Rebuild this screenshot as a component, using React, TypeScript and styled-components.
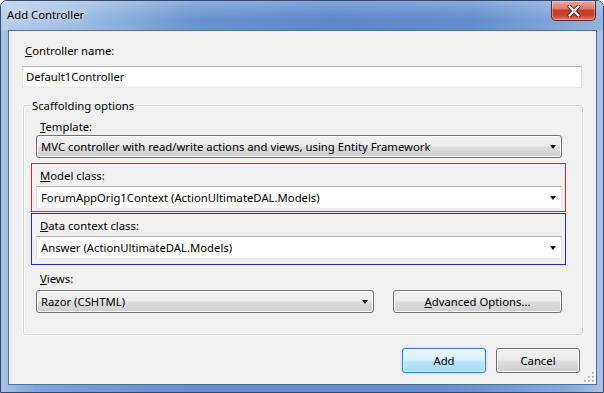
import React from 'react'
import styled, { createGlobalStyle, css } from 'styled-components'

const GlobalStyle = createGlobalStyle`
  html, body {
    margin: 0;
    padding: 0;
    background: #ffffff;
  }
  body {
    font-family: "Noto Sans", "Open Sans", sans-serif;
    font-size: 11.3px;
    color: #000;
  }
  * {
    box-sizing: border-box;
  }
`

const Window = styled.div`
  width: 604px;
  height: 393px;
  display: flex;
  flex-direction: column;
  border: 1px solid #34496b;
  border-radius: 7px 7px 0 0;
  overflow: hidden;
  background: linear-gradient(to right, #a9c3e6 0%, #7ea4d8 6%, #6690cd 30%, #6490cc 75%, #86a9da 94%, #a9c3e6 100%);
`

const TitleBar = styled.div`
  height: 29px;
  flex-shrink: 0;
  display: flex;
  align-items: flex-start;
  justify-content: space-between;
  padding: 0 7px 0 6px;
  background:
    linear-gradient(to bottom, rgba(255, 255, 255, 0.25), rgba(255, 255, 255, 0) 60%),
    linear-gradient(to right, #b7cdea 0%, #9cbbe2 14%, #6a94d0 32%, #5a88cb 55%, #618dcd 78%, #93b3df 100%);
`

const Title = styled.div`
  margin-top: 6px;
  line-height: 15px;
  color: #000;
  text-shadow: 0 0 6px #e8f0fb, 0 0 10px #dbe7f7;
`

const CloseButton = styled.div`
  width: 45px;
  height: 20px;
  display: flex;
  align-items: center;
  justify-content: center;
  border: 1px solid #5a2a2a;
  border-top: none;
  border-radius: 0 0 5px 5px;
  background: linear-gradient(to bottom, #e9a99c 0%, #dd7a6a 40%, #c53c2b 50%, #c6412e 75%, #e07b61 100%);
  box-shadow: inset 0 0 0 1px rgba(255, 255, 255, 0.35);
`

const Client = styled.div`
  flex: 1;
  margin: 0 6px 7px 7px;
  border: 1px solid #4f6f9c;
  background: #f0f0f0;
  padding: 12px 14px 0 13px;
  display: flex;
  flex-direction: column;
  position: relative;
`

const Label = styled.div<{ $indent: number }>`
  height: 15px;
  line-height: 15px;
  padding-left: ${p => p.$indent}px;
  white-space: nowrap;
`

const editFace = css`
  background: #fff;
  border: 1px solid #e3e9ef;
  border-top-color: #abadb3;
  border-left-color: #e2e3ea;
  border-right-color: #dbdfe6;
`

const TextBox = styled.div`
  height: 22px;
  margin-top: 8px;
  line-height: 20px;
  padding-left: 3px;
  ${editFace}
`

const GroupBox = styled.div`
  margin: 17px -1px 0 1px;
  height: 230px;
  border: 1px solid #d5d5d5;
  border-radius: 3px;
  box-shadow: inset 0 0 0 1px #ffffff, 0 0 0 1px rgba(255, 255, 255, 0.6);
  padding: 0 16px 0 7px;
  display: flex;
  flex-direction: column;
`

const Legend = styled.div`
  align-self: flex-start;
  margin: -8px 0 0 0;
  padding: 0 1px;
  height: 15px;
  line-height: 15px;
  background: #f0f0f0;
`

const Field = styled.div<{ $gap: number }>`
  margin-top: ${p => p.$gap}px;
  padding: 0 4px 0 5px;
  display: flex;
  flex-direction: column;
`

const Frame = styled.div`
  border: 1px solid transparent;
  display: flex;
  flex-direction: column;
`

const ModelFrame = styled(Frame)`
  margin-top: 5px;
  border-color: rgb(235, 30, 40);
  padding: 4px 3px 2px 4px;
`

const ContextFrame = styled(Frame)`
  margin-top: 1px;
  border-color: rgb(40, 40, 200);
  padding: 4px 3px 5px 4px;
`

const buttonFace = css`
  border: 1px solid #707070;
  border-radius: 3px;
  background: linear-gradient(to bottom, #f2f2f2 0%, #ebebeb 48%, #dddddd 52%, #cfcfcf 100%);
  box-shadow: inset 0 0 0 1px #fcfcfc;
`

const Combo = styled.div<{ $face: 'button' | 'edit'; $gap: number; $width?: number }>`
  height: 23px;
  margin-top: ${p => p.$gap}px;
  width: ${p => (p.$width ? `${p.$width}px` : 'auto')};
  display: flex;
  align-items: center;
  justify-content: space-between;
  padding: 0 4px 0 4px;
  white-space: nowrap;
  ${p => (p.$face === 'button' ? buttonFace : editFace)}
`

const Arrow = styled.span`
  width: 0;
  height: 0;
  margin-right: 1px;
  margin-top: 1px;
  border-left: 3.5px solid transparent;
  border-right: 3.5px solid transparent;
  border-top: 4px solid #000;
`

const Row = styled.div`
  margin-top: 4px;
  display: flex;
  align-items: center;
  justify-content: space-between;
`

const PushButton = styled.div<{ $width: number; $primary?: boolean }>`
  width: ${p => p.$width}px;
  height: ${p => (p.$primary !== undefined ? 25 : 23)}px;
  display: flex;
  align-items: center;
  justify-content: center;
  ${buttonFace}
  ${p =>
    p.$primary &&
    css`
      border-color: #3c7fb1;
      background: linear-gradient(to bottom, #eaf6fd 0%, #d9f0fc 48%, #bee6fd 52%, #a7d9f5 100%);
      box-shadow: inset 0 0 0 1px #cfeefc, 0 0 2px #8cc8ec;
    `}
`

const Footer = styled.div`
  margin-top: 13px;
  padding-right: 2px;
  display: flex;
  justify-content: flex-end;
  gap: 10px;
`

const Grip = styled.svg`
  position: absolute;
  right: 1px;
  bottom: 1px;
`

const CloseGlyph = () => (
  <svg width="14" height="12" viewBox="0 0 14 12">
    <path d="M2.5 1.5 L11.5 10.5 M11.5 1.5 L2.5 10.5" stroke="#5b1f1a" strokeWidth="4" strokeLinecap="round" />
    <path d="M2.5 1.5 L11.5 10.5 M11.5 1.5 L2.5 10.5" stroke="#ffffff" strokeWidth="2.4" strokeLinecap="round" />
  </svg>
)

const SizeGrip = () => {
  const dots = [
    [9, 1],
    [9, 5],
    [5, 5],
    [9, 9],
    [5, 9],
    [1, 9],
  ]
  return (
    <Grip width="12" height="12" viewBox="0 0 12 12">
      {dots.map(([x, y]) => (
        <g key={`${x}-${y}`}>
          <rect x={x + 1} y={y + 1} width="2" height="2" fill="#ffffff" />
          <rect x={x} y={y} width="2" height="2" fill="#b8b8b8" />
        </g>
      ))}
    </Grip>
  )
}

const App: React.FC = () => {
  return (
    <>
      <GlobalStyle />
      <Window>
        <TitleBar>
          <Title>Add Controller</Title>
          <CloseButton>
            <CloseGlyph />
          </CloseButton>
        </TitleBar>
        <Client>
          <Label $indent={3}>
            <u>C</u>ontroller name:
          </Label>
          <TextBox>Default1Controller</TextBox>

          <GroupBox>
            <Legend>Scaffolding options</Legend>

            <Field $gap={6}>
              <Label $indent={4}>
                <u>T</u>emplate:
              </Label>
              <Combo $face="button" $gap={1}>
                <span>MVC controller with read/write actions and views, using Entity Framework</span>
                <Arrow />
              </Combo>
            </Field>

            <ModelFrame>
              <Label $indent={4}>
                <u>M</u>odel class:
              </Label>
              <Combo $face="edit" $gap={3}>
                <span>ForumAppOrig1Context (ActionUltimateDAL.Models)</span>
                <Arrow />
              </Combo>
            </ModelFrame>

            <ContextFrame>
              <Label $indent={4}>
                <u>D</u>ata context class:
              </Label>
              <Combo $face="edit" $gap={3}>
                <span>Answer (ActionUltimateDAL.Models)</span>
                <Arrow />
              </Combo>
            </ContextFrame>

            <Field $gap={6}>
              <Label $indent={4}>
                <u>V</u>iews:
              </Label>
              <Row>
                <Combo $face="button" $gap={0} $width={338}>
                  <span>Razor (CSHTML)</span>
                  <Arrow />
                </Combo>
                <PushButton $width={169}>
                  <span>
                    <u>A</u>dvanced Options...
                  </span>
                </PushButton>
              </Row>
            </Field>
          </GroupBox>

          <Footer>
            <PushButton $width={84} $primary>
              Add
            </PushButton>
            <PushButton $width={84} $primary={false}>
              Cancel
            </PushButton>
          </Footer>
          <SizeGrip />
        </Client>
      </Window>
    </>
  )
}

export default App
